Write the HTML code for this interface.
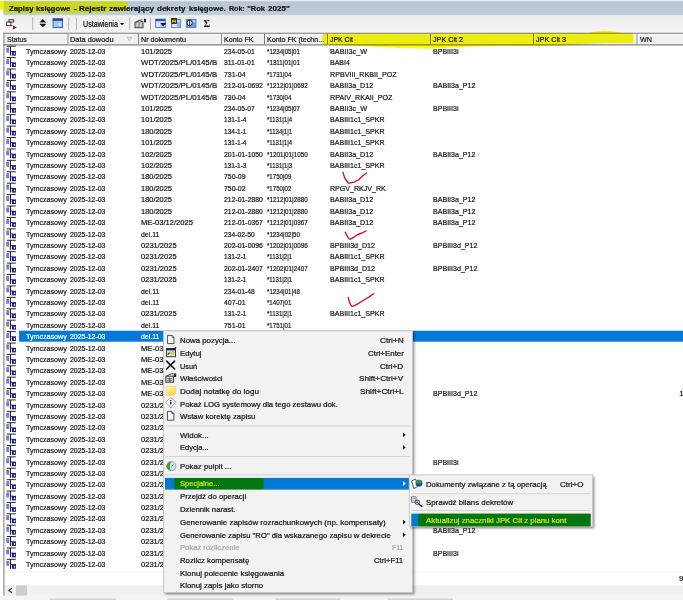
<!DOCTYPE html>
<html lang="pl"><head><meta charset="utf-8"><title>Zapisy księgowe</title>
<style>
html,body{margin:0;padding:0}
body{width:683px;height:600px;overflow:hidden;position:relative;background:#fff;font-family:"Liberation Sans",sans-serif;color:#161616}
.abs,.t,i{position:absolute;display:block}
.t{white-space:nowrap;transform-origin:0 0;-webkit-text-stroke:0.22px currentColor}
.sep{height:1px;background:#d6d6d6}
svg{position:absolute;display:block;overflow:visible}
</style></head><body>
<svg style="left:0;top:0" width="683" height="600" viewBox="0 0 683 600">
<defs><linearGradient id="tg" x1="0" y1="0" x2="0" y2="1"><stop offset="0" stop-color="#e9edf3"/><stop offset="0.05" stop-color="#e9edf3"/><stop offset="0.11" stop-color="#b8c6d7"/><stop offset="1" stop-color="#c2cddb"/></linearGradient>
<linearGradient id="tbg" x1="0" y1="0" x2="0" y2="1"><stop offset="0" stop-color="#eeeeee"/><stop offset="1" stop-color="#f4f4f4"/></linearGradient>
<filter id="sh" x="-5%" y="-5%" width="110%" height="110%"><feGaussianBlur stdDeviation="0.9"/></filter></defs>
<rect x="3.5" y="0" width="680" height="15.5" fill="url(#tg)"/>
<rect x="3.5" y="15.5" width="680" height="17.6" fill="url(#tbg)"/>
<rect x="4" y="33" width="679" height="12" fill="#f1f1f1"/>
<rect x="4.4" y="585.2" width="678.6" height="10.6" fill="#f0f0f0"/>
<rect x="0" y="595.8" width="683" height="4.2" fill="#f3f3f3"/>
<rect x="16" y="585.4" width="11.1" height="10.2" fill="#cdcdcd"/>
<rect x="4.6" y="571.4" width="678.4" height="1" fill="#f3f3f3"/>
<path d="M49.8 599.2H116.2M167.3 599.2H233.4M275.5 599.2H340.4M387.6 599.2H452.9" stroke="#d2d2d2" stroke-width="1.6"/>
<path d="M32.7 17.6V30M68.7 17.6V30M76.5 17.6V30M129.7 17.6V30M150.5 17.6V30" stroke="#b4b4b4" stroke-width="1"/>
</svg>
<svg style="left:0;top:0" width="140" height="16" viewBox="0 0 140 16"><path d="M3.5 1.3H122Q126.4 1.6 127.8 3.4L128.2 9.6Q127.6 11.2 124 11.5L110 11.6Q107 12.8 103 13H3.5Z" fill="#c9d622"/><rect x="0" y="0.9" width="3.5" height="8.8" fill="#f1f114"/></svg>
<span class="t" style="top:5.30px;font-size:7.5px;line-height:8.62px;left:8.80px;transform:scaleX(1.0354);color:#141414;font-weight:bold;">Zapisy</span><span class="t" style="top:5.30px;font-size:7.5px;line-height:8.62px;left:36.40px;transform:scaleX(1.0159);color:#141414;font-weight:bold;">księgowe</span><span class="t" style="top:5.30px;font-size:7.5px;line-height:8.62px;left:74.20px;transform:scaleX(1.0410);color:#141414;font-weight:bold;">-</span><span class="t" style="top:5.30px;font-size:7.5px;line-height:8.62px;left:78.80px;transform:scaleX(1.0775);color:#141414;font-weight:bold;">Rejestr</span><span class="t" style="top:5.30px;font-size:7.5px;line-height:8.62px;left:108.70px;transform:scaleX(1.0768);color:#141414;font-weight:bold;">zawierający</span><span class="t" style="top:5.30px;font-size:7.5px;line-height:8.62px;left:156.80px;transform:scaleX(1.0681);color:#141414;font-weight:bold;">dekrety</span><span class="t" style="top:5.30px;font-size:7.5px;line-height:8.62px;left:189.20px;transform:scaleX(1.0182);color:#141414;font-weight:bold;">księgowe.</span><span class="t" style="top:5.30px;font-size:7.5px;line-height:8.62px;left:228.50px;transform:scaleX(0.9420);color:#141414;font-weight:bold;">Rok:</span><span class="t" style="top:5.30px;font-size:7.5px;line-height:8.62px;left:247.30px;color:#141414;font-weight:bold;">&quot;Rok</span><span class="t" style="top:5.30px;font-size:7.5px;line-height:8.62px;left:268.20px;transform:scaleX(1.0721);color:#141414;font-weight:bold;">2025&quot;</span>
<span class="t" style="top:19.70px;font-size:8.2px;line-height:9.42px;left:83.40px;transform:scaleX(0.8715);color:#141414;">Ustawienia</span>
<svg style="left:0;top:0" width="683" height="34" viewBox="0 0 683 34">
<!-- icon1 -->
<rect x="6.6" y="22" width="4.2" height="3.6" fill="#fff" stroke="#2a2a2a" stroke-width="0.9"/>
<rect x="8.9" y="19.7" width="4.8" height="2.3" fill="#f6f2b4" stroke="#2a2a2a" stroke-width="0.9"/>
<path d="M10.8 25.6H12.4" stroke="#2a2a2a" stroke-width="0.9"/>
<path d="M13 25.4L16.8 27.4L13 29.4Z" fill="#96121c"/>
<!-- icon2 up/down -->
<path d="M39.4 22.4L42.8 19L46.2 22.4Z" fill="#161616"/>
<rect x="39.8" y="22.6" width="6" height="1.1" fill="#9a9a9a"/>
<path d="M39.4 23.9L42.8 27.3L46.2 23.9Z" fill="#161616"/>
<!-- icon3 window -->
<rect x="53.1" y="18.9" width="9.4" height="8.7" fill="#a9c9f1" stroke="#2e5fc6" stroke-width="0.9"/>
<rect x="52.7" y="18.5" width="10.2" height="2.3" fill="#1f429e"/>
<rect x="57.4" y="22.6" width="4.2" height="3.6" fill="#d4e4f8" stroke="#7ea4dc" stroke-width="0.5"/>
<!-- icon4 properties -->
<path d="M135 27.7V22.4L139.4 20.3L143 22V27.7Z" fill="#b9b9b9" stroke="#4a4a4a" stroke-width="1.05"/>
<path d="M136.6 24H141.4M136.6 25.8H141.4" stroke="#f2f2f2" stroke-width="0.8"/><path d="M139 22.6V27.4" stroke="#5a5a5a" stroke-width="0.9"/>
<path d="M136 22.4L142.4 19.2" stroke="#5e5e5e" stroke-width="0.9"/>
<rect x="144" y="18.8" width="1.9" height="3.5" fill="#14147c"/>
<!-- icon5 window w/ dropdown -->
<rect x="155.6" y="19.1" width="9.7" height="8.3" fill="#b4d0f3" stroke="#3a70cf" stroke-width="0.8"/>
<rect x="155.6" y="19.1" width="9.7" height="1.9" fill="#2152b6"/>
<rect x="156.8" y="22.4" width="1" height="4" fill="#fff"/><rect x="158.6" y="22.4" width="1" height="4" fill="#fff"/>
<path d="M160.3 22.9H166.1L163.2 26.5Z" fill="#101010"/>
<!-- icon6 window w/ label -->
<rect x="171.5" y="19.3" width="9.2" height="8.2" fill="#8fb8e8" stroke="#3c7acb" stroke-width="0.8"/>
<rect x="172.4" y="24" width="4.4" height="2.9" fill="#dfeaf8"/>
<rect x="176.9" y="20.4" width="3" height="1.2" fill="#e8f0fb"/>
<rect x="171.1" y="18" width="5.8" height="5.8" fill="#2a2508"/>
<path d="M172.6 22.8V20.2H175.4V22.8M172.6 21.6H175.4" stroke="#e6d23a" stroke-width="0.9" fill="none"/>
<!-- icon7 window w/ () -->
<rect x="186.5" y="19.3" width="9.5" height="8.2" fill="#6d9fdc" stroke="#3c7acb" stroke-width="0.8"/>
<rect x="192.4" y="20.6" width="3" height="1.2" fill="#e8f0fb"/>
<ellipse cx="189.6" cy="22.8" rx="2.6" ry="3" fill="#fff" stroke="#121212" stroke-width="1"/>
<path d="M189.6 20V25.6" stroke="#121212" stroke-width="0.9"/>
<text x="203.4" y="27.1" font-family="'Liberation Serif',serif" font-weight="bold" font-size="10.2" fill="#101010">Σ</text>
<!-- dropdown arrow of Ustawienia -->
<path d="M119.8 23H124.4L122.1 25.3Z" fill="#161616"/>
</svg>

<svg style="left:0;top:0" width="683" height="600" viewBox="0 0 683 600"><path d="M3.5 33.3H683" stroke="#646464" stroke-width="1"/><path d="M4.4 34.3H683" stroke="#fff" stroke-width="0.9"/><path d="M3.5 44.85H683" stroke="#828282" stroke-width="1.2"/><path d="M68.10 33.8V44.3" stroke="#6e6e6e" stroke-width="1"/><path d="M69.05 33.8V44.3" stroke="#fff" stroke-width="0.9"/><path d="M138.70 33.8V44.3" stroke="#6e6e6e" stroke-width="1"/><path d="M139.65 33.8V44.3" stroke="#fff" stroke-width="0.9"/><path d="M221.80 33.8V44.3" stroke="#6e6e6e" stroke-width="1"/><path d="M222.75 33.8V44.3" stroke="#fff" stroke-width="0.9"/><path d="M264.50 33.8V44.3" stroke="#6e6e6e" stroke-width="1"/><path d="M265.45 33.8V44.3" stroke="#fff" stroke-width="0.9"/><path d="M327.70 33.8V44.3" stroke="#6e6e6e" stroke-width="1"/><path d="M328.65 33.8V44.3" stroke="#fff" stroke-width="0.9"/><path d="M430.60 33.8V44.3" stroke="#6e6e6e" stroke-width="1"/><path d="M431.55 33.8V44.3" stroke="#fff" stroke-width="0.9"/><path d="M533.50 33.8V44.3" stroke="#6e6e6e" stroke-width="1"/><path d="M534.45 33.8V44.3" stroke="#fff" stroke-width="0.9"/><path d="M637.10 33.8V44.3" stroke="#6e6e6e" stroke-width="1"/><path d="M638.05 33.8V44.3" stroke="#fff" stroke-width="0.9"/><path d="M3.95 32.8V595.8" stroke="#707070" stroke-width="0.95"/></svg>
<span class="t" style="top:35.20px;font-size:8.0px;line-height:9.19px;left:7.00px;transform:scaleX(0.8730);color:#161616;">Status</span>
<span class="t" style="top:35.20px;font-size:8.0px;line-height:9.19px;left:69.50px;transform:scaleX(0.9227);color:#161616;">Data dowodu</span>
<span class="t" style="top:35.20px;font-size:8.0px;line-height:9.19px;left:140.70px;transform:scaleX(0.8956);color:#161616;">Nr dokumentu</span>
<span class="t" style="top:35.20px;font-size:8.0px;line-height:9.19px;left:223.90px;transform:scaleX(0.8845);color:#161616;">Konto FK</span>
<span class="t" style="top:35.20px;font-size:8.0px;line-height:9.19px;left:266.60px;transform:scaleX(0.8856);color:#161616;">Konto FK (techn...</span>
<span class="t" style="top:35.20px;font-size:8.0px;line-height:9.19px;left:329.90px;transform:scaleX(0.8548);color:#161616;">JPK Cit</span>
<span class="t" style="top:35.20px;font-size:8.0px;line-height:9.19px;left:433.00px;transform:scaleX(0.8997);color:#161616;">JPK Cit 2</span>
<span class="t" style="top:35.20px;font-size:8.0px;line-height:9.19px;left:536.00px;transform:scaleX(0.8997);color:#161616;">JPK Cit 3</span>
<span class="t" style="top:35.20px;font-size:8.0px;line-height:9.19px;left:640.10px;transform:scaleX(0.8928);color:#161616;">WN</span>
<svg style="left:127.4px;top:37.4px" width="5" height="4" viewBox="0 0 5 4"><path d="M0.3 0.3H4.7L2.5 3.6Z" fill="none" stroke="#9a9a9a" stroke-width="0.6"/></svg>
<svg style="left:0;top:0" width="20" height="600" viewBox="0 0 20 600"><g transform="translate(6.40 45.70)"><rect x="0" y="2" width="2.6" height="4.6" fill="#a8a8ea"/><path d="M0 2.6h2.6M0 3.9h2.6M0 5.2h2.6M0 6.4h2.6" stroke="#5656c8" stroke-width="0.8"/><path d="M0.4 0.5H9.4" stroke="#1c1c1c" stroke-width="0.95"/><path d="M4.05 0.5V9.9" stroke="#1c1c1c" stroke-width="1.05"/><path d="M4.5 5.6H6" stroke="#1c1c1c" stroke-width="0.8"/><rect x="5.5" y="5.3" width="4.1" height="4.6" fill="#18188e"/><rect x="7.4" y="6.9" width="1.4" height="1.8" fill="#fff"/></g><g transform="translate(6.40 57.12)"><rect x="0" y="2" width="2.6" height="4.6" fill="#a8a8ea"/><path d="M0 2.6h2.6M0 3.9h2.6M0 5.2h2.6M0 6.4h2.6" stroke="#5656c8" stroke-width="0.8"/><path d="M0.4 0.5H9.4" stroke="#1c1c1c" stroke-width="0.95"/><path d="M4.05 0.5V9.9" stroke="#1c1c1c" stroke-width="1.05"/><path d="M4.5 5.6H6" stroke="#1c1c1c" stroke-width="0.8"/><rect x="5.5" y="5.3" width="4.1" height="4.6" fill="#18188e"/><rect x="7.4" y="6.9" width="1.4" height="1.8" fill="#fff"/></g><g transform="translate(6.40 68.53)"><rect x="0" y="2" width="2.6" height="4.6" fill="#a8a8ea"/><path d="M0 2.6h2.6M0 3.9h2.6M0 5.2h2.6M0 6.4h2.6" stroke="#5656c8" stroke-width="0.8"/><path d="M0.4 0.5H9.4" stroke="#1c1c1c" stroke-width="0.95"/><path d="M4.05 0.5V9.9" stroke="#1c1c1c" stroke-width="1.05"/><path d="M4.5 5.6H6" stroke="#1c1c1c" stroke-width="0.8"/><rect x="5.5" y="5.3" width="4.1" height="4.6" fill="#18188e"/><rect x="7.4" y="6.9" width="1.4" height="1.8" fill="#fff"/></g><g transform="translate(6.40 79.95)"><rect x="0" y="2" width="2.6" height="4.6" fill="#a8a8ea"/><path d="M0 2.6h2.6M0 3.9h2.6M0 5.2h2.6M0 6.4h2.6" stroke="#5656c8" stroke-width="0.8"/><path d="M0.4 0.5H9.4" stroke="#1c1c1c" stroke-width="0.95"/><path d="M4.05 0.5V9.9" stroke="#1c1c1c" stroke-width="1.05"/><path d="M4.5 5.6H6" stroke="#1c1c1c" stroke-width="0.8"/><rect x="5.5" y="5.3" width="4.1" height="4.6" fill="#18188e"/><rect x="7.4" y="6.9" width="1.4" height="1.8" fill="#fff"/></g><g transform="translate(6.40 91.36)"><rect x="0" y="2" width="2.6" height="4.6" fill="#a8a8ea"/><path d="M0 2.6h2.6M0 3.9h2.6M0 5.2h2.6M0 6.4h2.6" stroke="#5656c8" stroke-width="0.8"/><path d="M0.4 0.5H9.4" stroke="#1c1c1c" stroke-width="0.95"/><path d="M4.05 0.5V9.9" stroke="#1c1c1c" stroke-width="1.05"/><path d="M4.5 5.6H6" stroke="#1c1c1c" stroke-width="0.8"/><rect x="5.5" y="5.3" width="4.1" height="4.6" fill="#18188e"/><rect x="7.4" y="6.9" width="1.4" height="1.8" fill="#fff"/></g><g transform="translate(6.40 102.78)"><rect x="0" y="2" width="2.6" height="4.6" fill="#a8a8ea"/><path d="M0 2.6h2.6M0 3.9h2.6M0 5.2h2.6M0 6.4h2.6" stroke="#5656c8" stroke-width="0.8"/><path d="M0.4 0.5H9.4" stroke="#1c1c1c" stroke-width="0.95"/><path d="M4.05 0.5V9.9" stroke="#1c1c1c" stroke-width="1.05"/><path d="M4.5 5.6H6" stroke="#1c1c1c" stroke-width="0.8"/><rect x="5.5" y="5.3" width="4.1" height="4.6" fill="#18188e"/><rect x="7.4" y="6.9" width="1.4" height="1.8" fill="#fff"/></g><g transform="translate(6.40 114.20)"><rect x="0" y="2" width="2.6" height="4.6" fill="#a8a8ea"/><path d="M0 2.6h2.6M0 3.9h2.6M0 5.2h2.6M0 6.4h2.6" stroke="#5656c8" stroke-width="0.8"/><path d="M0.4 0.5H9.4" stroke="#1c1c1c" stroke-width="0.95"/><path d="M4.05 0.5V9.9" stroke="#1c1c1c" stroke-width="1.05"/><path d="M4.5 5.6H6" stroke="#1c1c1c" stroke-width="0.8"/><rect x="5.5" y="5.3" width="4.1" height="4.6" fill="#18188e"/><rect x="7.4" y="6.9" width="1.4" height="1.8" fill="#fff"/></g><g transform="translate(6.40 125.61)"><rect x="0" y="2" width="2.6" height="4.6" fill="#a8a8ea"/><path d="M0 2.6h2.6M0 3.9h2.6M0 5.2h2.6M0 6.4h2.6" stroke="#5656c8" stroke-width="0.8"/><path d="M0.4 0.5H9.4" stroke="#1c1c1c" stroke-width="0.95"/><path d="M4.05 0.5V9.9" stroke="#1c1c1c" stroke-width="1.05"/><path d="M4.5 5.6H6" stroke="#1c1c1c" stroke-width="0.8"/><rect x="5.5" y="5.3" width="4.1" height="4.6" fill="#18188e"/><rect x="7.4" y="6.9" width="1.4" height="1.8" fill="#fff"/></g><g transform="translate(6.40 137.03)"><rect x="0" y="2" width="2.6" height="4.6" fill="#a8a8ea"/><path d="M0 2.6h2.6M0 3.9h2.6M0 5.2h2.6M0 6.4h2.6" stroke="#5656c8" stroke-width="0.8"/><path d="M0.4 0.5H9.4" stroke="#1c1c1c" stroke-width="0.95"/><path d="M4.05 0.5V9.9" stroke="#1c1c1c" stroke-width="1.05"/><path d="M4.5 5.6H6" stroke="#1c1c1c" stroke-width="0.8"/><rect x="5.5" y="5.3" width="4.1" height="4.6" fill="#18188e"/><rect x="7.4" y="6.9" width="1.4" height="1.8" fill="#fff"/></g><g transform="translate(6.40 148.44)"><rect x="0" y="2" width="2.6" height="4.6" fill="#a8a8ea"/><path d="M0 2.6h2.6M0 3.9h2.6M0 5.2h2.6M0 6.4h2.6" stroke="#5656c8" stroke-width="0.8"/><path d="M0.4 0.5H9.4" stroke="#1c1c1c" stroke-width="0.95"/><path d="M4.05 0.5V9.9" stroke="#1c1c1c" stroke-width="1.05"/><path d="M4.5 5.6H6" stroke="#1c1c1c" stroke-width="0.8"/><rect x="5.5" y="5.3" width="4.1" height="4.6" fill="#18188e"/><rect x="7.4" y="6.9" width="1.4" height="1.8" fill="#fff"/></g><g transform="translate(6.40 159.86)"><rect x="0" y="2" width="2.6" height="4.6" fill="#a8a8ea"/><path d="M0 2.6h2.6M0 3.9h2.6M0 5.2h2.6M0 6.4h2.6" stroke="#5656c8" stroke-width="0.8"/><path d="M0.4 0.5H9.4" stroke="#1c1c1c" stroke-width="0.95"/><path d="M4.05 0.5V9.9" stroke="#1c1c1c" stroke-width="1.05"/><path d="M4.5 5.6H6" stroke="#1c1c1c" stroke-width="0.8"/><rect x="5.5" y="5.3" width="4.1" height="4.6" fill="#18188e"/><rect x="7.4" y="6.9" width="1.4" height="1.8" fill="#fff"/></g><g transform="translate(6.40 171.28)"><rect x="0" y="2" width="2.6" height="4.6" fill="#a8a8ea"/><path d="M0 2.6h2.6M0 3.9h2.6M0 5.2h2.6M0 6.4h2.6" stroke="#5656c8" stroke-width="0.8"/><path d="M0.4 0.5H9.4" stroke="#1c1c1c" stroke-width="0.95"/><path d="M4.05 0.5V9.9" stroke="#1c1c1c" stroke-width="1.05"/><path d="M4.5 5.6H6" stroke="#1c1c1c" stroke-width="0.8"/><rect x="5.5" y="5.3" width="4.1" height="4.6" fill="#18188e"/><rect x="7.4" y="6.9" width="1.4" height="1.8" fill="#fff"/></g><g transform="translate(6.40 182.69)"><rect x="0" y="2" width="2.6" height="4.6" fill="#a8a8ea"/><path d="M0 2.6h2.6M0 3.9h2.6M0 5.2h2.6M0 6.4h2.6" stroke="#5656c8" stroke-width="0.8"/><path d="M0.4 0.5H9.4" stroke="#1c1c1c" stroke-width="0.95"/><path d="M4.05 0.5V9.9" stroke="#1c1c1c" stroke-width="1.05"/><path d="M4.5 5.6H6" stroke="#1c1c1c" stroke-width="0.8"/><rect x="5.5" y="5.3" width="4.1" height="4.6" fill="#18188e"/><rect x="7.4" y="6.9" width="1.4" height="1.8" fill="#fff"/></g><g transform="translate(6.40 194.11)"><rect x="0" y="2" width="2.6" height="4.6" fill="#a8a8ea"/><path d="M0 2.6h2.6M0 3.9h2.6M0 5.2h2.6M0 6.4h2.6" stroke="#5656c8" stroke-width="0.8"/><path d="M0.4 0.5H9.4" stroke="#1c1c1c" stroke-width="0.95"/><path d="M4.05 0.5V9.9" stroke="#1c1c1c" stroke-width="1.05"/><path d="M4.5 5.6H6" stroke="#1c1c1c" stroke-width="0.8"/><rect x="5.5" y="5.3" width="4.1" height="4.6" fill="#18188e"/><rect x="7.4" y="6.9" width="1.4" height="1.8" fill="#fff"/></g><g transform="translate(6.40 205.52)"><rect x="0" y="2" width="2.6" height="4.6" fill="#a8a8ea"/><path d="M0 2.6h2.6M0 3.9h2.6M0 5.2h2.6M0 6.4h2.6" stroke="#5656c8" stroke-width="0.8"/><path d="M0.4 0.5H9.4" stroke="#1c1c1c" stroke-width="0.95"/><path d="M4.05 0.5V9.9" stroke="#1c1c1c" stroke-width="1.05"/><path d="M4.5 5.6H6" stroke="#1c1c1c" stroke-width="0.8"/><rect x="5.5" y="5.3" width="4.1" height="4.6" fill="#18188e"/><rect x="7.4" y="6.9" width="1.4" height="1.8" fill="#fff"/></g><g transform="translate(6.40 216.94)"><rect x="0" y="2" width="2.6" height="4.6" fill="#a8a8ea"/><path d="M0 2.6h2.6M0 3.9h2.6M0 5.2h2.6M0 6.4h2.6" stroke="#5656c8" stroke-width="0.8"/><path d="M0.4 0.5H9.4" stroke="#1c1c1c" stroke-width="0.95"/><path d="M4.05 0.5V9.9" stroke="#1c1c1c" stroke-width="1.05"/><path d="M4.5 5.6H6" stroke="#1c1c1c" stroke-width="0.8"/><rect x="5.5" y="5.3" width="4.1" height="4.6" fill="#18188e"/><rect x="7.4" y="6.9" width="1.4" height="1.8" fill="#fff"/></g><g transform="translate(6.40 228.36)"><rect x="0" y="2" width="2.6" height="4.6" fill="#a8a8ea"/><path d="M0 2.6h2.6M0 3.9h2.6M0 5.2h2.6M0 6.4h2.6" stroke="#5656c8" stroke-width="0.8"/><path d="M0.4 0.5H9.4" stroke="#1c1c1c" stroke-width="0.95"/><path d="M4.05 0.5V9.9" stroke="#1c1c1c" stroke-width="1.05"/><path d="M4.5 5.6H6" stroke="#1c1c1c" stroke-width="0.8"/><rect x="5.5" y="5.3" width="4.1" height="4.6" fill="#18188e"/><rect x="7.4" y="6.9" width="1.4" height="1.8" fill="#fff"/></g><g transform="translate(6.40 239.77)"><rect x="0" y="2" width="2.6" height="4.6" fill="#a8a8ea"/><path d="M0 2.6h2.6M0 3.9h2.6M0 5.2h2.6M0 6.4h2.6" stroke="#5656c8" stroke-width="0.8"/><path d="M0.4 0.5H9.4" stroke="#1c1c1c" stroke-width="0.95"/><path d="M4.05 0.5V9.9" stroke="#1c1c1c" stroke-width="1.05"/><path d="M4.5 5.6H6" stroke="#1c1c1c" stroke-width="0.8"/><rect x="5.5" y="5.3" width="4.1" height="4.6" fill="#18188e"/><rect x="7.4" y="6.9" width="1.4" height="1.8" fill="#fff"/></g><g transform="translate(6.40 251.19)"><rect x="0" y="2" width="2.6" height="4.6" fill="#a8a8ea"/><path d="M0 2.6h2.6M0 3.9h2.6M0 5.2h2.6M0 6.4h2.6" stroke="#5656c8" stroke-width="0.8"/><path d="M0.4 0.5H9.4" stroke="#1c1c1c" stroke-width="0.95"/><path d="M4.05 0.5V9.9" stroke="#1c1c1c" stroke-width="1.05"/><path d="M4.5 5.6H6" stroke="#1c1c1c" stroke-width="0.8"/><rect x="5.5" y="5.3" width="4.1" height="4.6" fill="#18188e"/><rect x="7.4" y="6.9" width="1.4" height="1.8" fill="#fff"/></g><g transform="translate(6.40 262.60)"><rect x="0" y="2" width="2.6" height="4.6" fill="#a8a8ea"/><path d="M0 2.6h2.6M0 3.9h2.6M0 5.2h2.6M0 6.4h2.6" stroke="#5656c8" stroke-width="0.8"/><path d="M0.4 0.5H9.4" stroke="#1c1c1c" stroke-width="0.95"/><path d="M4.05 0.5V9.9" stroke="#1c1c1c" stroke-width="1.05"/><path d="M4.5 5.6H6" stroke="#1c1c1c" stroke-width="0.8"/><rect x="5.5" y="5.3" width="4.1" height="4.6" fill="#18188e"/><rect x="7.4" y="6.9" width="1.4" height="1.8" fill="#fff"/></g><g transform="translate(6.40 274.02)"><rect x="0" y="2" width="2.6" height="4.6" fill="#a8a8ea"/><path d="M0 2.6h2.6M0 3.9h2.6M0 5.2h2.6M0 6.4h2.6" stroke="#5656c8" stroke-width="0.8"/><path d="M0.4 0.5H9.4" stroke="#1c1c1c" stroke-width="0.95"/><path d="M4.05 0.5V9.9" stroke="#1c1c1c" stroke-width="1.05"/><path d="M4.5 5.6H6" stroke="#1c1c1c" stroke-width="0.8"/><rect x="5.5" y="5.3" width="4.1" height="4.6" fill="#18188e"/><rect x="7.4" y="6.9" width="1.4" height="1.8" fill="#fff"/></g><g transform="translate(6.40 285.44)"><rect x="0" y="2" width="2.6" height="4.6" fill="#a8a8ea"/><path d="M0 2.6h2.6M0 3.9h2.6M0 5.2h2.6M0 6.4h2.6" stroke="#5656c8" stroke-width="0.8"/><path d="M0.4 0.5H9.4" stroke="#1c1c1c" stroke-width="0.95"/><path d="M4.05 0.5V9.9" stroke="#1c1c1c" stroke-width="1.05"/><path d="M4.5 5.6H6" stroke="#1c1c1c" stroke-width="0.8"/><rect x="5.5" y="5.3" width="4.1" height="4.6" fill="#18188e"/><rect x="7.4" y="6.9" width="1.4" height="1.8" fill="#fff"/></g><g transform="translate(6.40 296.85)"><rect x="0" y="2" width="2.6" height="4.6" fill="#a8a8ea"/><path d="M0 2.6h2.6M0 3.9h2.6M0 5.2h2.6M0 6.4h2.6" stroke="#5656c8" stroke-width="0.8"/><path d="M0.4 0.5H9.4" stroke="#1c1c1c" stroke-width="0.95"/><path d="M4.05 0.5V9.9" stroke="#1c1c1c" stroke-width="1.05"/><path d="M4.5 5.6H6" stroke="#1c1c1c" stroke-width="0.8"/><rect x="5.5" y="5.3" width="4.1" height="4.6" fill="#18188e"/><rect x="7.4" y="6.9" width="1.4" height="1.8" fill="#fff"/></g><g transform="translate(6.40 308.27)"><rect x="0" y="2" width="2.6" height="4.6" fill="#a8a8ea"/><path d="M0 2.6h2.6M0 3.9h2.6M0 5.2h2.6M0 6.4h2.6" stroke="#5656c8" stroke-width="0.8"/><path d="M0.4 0.5H9.4" stroke="#1c1c1c" stroke-width="0.95"/><path d="M4.05 0.5V9.9" stroke="#1c1c1c" stroke-width="1.05"/><path d="M4.5 5.6H6" stroke="#1c1c1c" stroke-width="0.8"/><rect x="5.5" y="5.3" width="4.1" height="4.6" fill="#18188e"/><rect x="7.4" y="6.9" width="1.4" height="1.8" fill="#fff"/></g><g transform="translate(6.40 319.68)"><rect x="0" y="2" width="2.6" height="4.6" fill="#a8a8ea"/><path d="M0 2.6h2.6M0 3.9h2.6M0 5.2h2.6M0 6.4h2.6" stroke="#5656c8" stroke-width="0.8"/><path d="M0.4 0.5H9.4" stroke="#1c1c1c" stroke-width="0.95"/><path d="M4.05 0.5V9.9" stroke="#1c1c1c" stroke-width="1.05"/><path d="M4.5 5.6H6" stroke="#1c1c1c" stroke-width="0.8"/><rect x="5.5" y="5.3" width="4.1" height="4.6" fill="#18188e"/><rect x="7.4" y="6.9" width="1.4" height="1.8" fill="#fff"/></g><g transform="translate(6.40 331.10)"><rect x="0" y="2" width="2.6" height="4.6" fill="#a8a8ea"/><path d="M0 2.6h2.6M0 3.9h2.6M0 5.2h2.6M0 6.4h2.6" stroke="#5656c8" stroke-width="0.8"/><path d="M0.4 0.5H9.4" stroke="#1c1c1c" stroke-width="0.95"/><path d="M4.05 0.5V9.9" stroke="#1c1c1c" stroke-width="1.05"/><path d="M4.5 5.6H6" stroke="#1c1c1c" stroke-width="0.8"/><rect x="5.5" y="5.3" width="4.1" height="4.6" fill="#18188e"/><rect x="7.4" y="6.9" width="1.4" height="1.8" fill="#fff"/></g><g transform="translate(6.40 342.52)"><rect x="0" y="2" width="2.6" height="4.6" fill="#a8a8ea"/><path d="M0 2.6h2.6M0 3.9h2.6M0 5.2h2.6M0 6.4h2.6" stroke="#5656c8" stroke-width="0.8"/><path d="M0.4 0.5H9.4" stroke="#1c1c1c" stroke-width="0.95"/><path d="M4.05 0.5V9.9" stroke="#1c1c1c" stroke-width="1.05"/><path d="M4.5 5.6H6" stroke="#1c1c1c" stroke-width="0.8"/><rect x="5.5" y="5.3" width="4.1" height="4.6" fill="#18188e"/><rect x="7.4" y="6.9" width="1.4" height="1.8" fill="#fff"/></g><g transform="translate(6.40 353.90)"><rect x="0" y="2" width="2.6" height="4.6" fill="#a8a8ea"/><path d="M0 2.6h2.6M0 3.9h2.6M0 5.2h2.6M0 6.4h2.6" stroke="#5656c8" stroke-width="0.8"/><path d="M0.4 0.5H9.4" stroke="#1c1c1c" stroke-width="0.95"/><path d="M4.05 0.5V9.9" stroke="#1c1c1c" stroke-width="1.05"/><path d="M4.5 5.6H6" stroke="#1c1c1c" stroke-width="0.8"/><rect x="5.5" y="5.3" width="4.1" height="4.6" fill="#18188e"/><rect x="7.4" y="6.9" width="1.4" height="1.8" fill="#fff"/></g><g transform="translate(6.40 365.29)"><rect x="0" y="2" width="2.6" height="4.6" fill="#a8a8ea"/><path d="M0 2.6h2.6M0 3.9h2.6M0 5.2h2.6M0 6.4h2.6" stroke="#5656c8" stroke-width="0.8"/><path d="M0.4 0.5H9.4" stroke="#1c1c1c" stroke-width="0.95"/><path d="M4.05 0.5V9.9" stroke="#1c1c1c" stroke-width="1.05"/><path d="M4.5 5.6H6" stroke="#1c1c1c" stroke-width="0.8"/><rect x="5.5" y="5.3" width="4.1" height="4.6" fill="#18188e"/><rect x="7.4" y="6.9" width="1.4" height="1.8" fill="#fff"/></g><g transform="translate(6.40 376.67)"><rect x="0" y="2" width="2.6" height="4.6" fill="#a8a8ea"/><path d="M0 2.6h2.6M0 3.9h2.6M0 5.2h2.6M0 6.4h2.6" stroke="#5656c8" stroke-width="0.8"/><path d="M0.4 0.5H9.4" stroke="#1c1c1c" stroke-width="0.95"/><path d="M4.05 0.5V9.9" stroke="#1c1c1c" stroke-width="1.05"/><path d="M4.5 5.6H6" stroke="#1c1c1c" stroke-width="0.8"/><rect x="5.5" y="5.3" width="4.1" height="4.6" fill="#18188e"/><rect x="7.4" y="6.9" width="1.4" height="1.8" fill="#fff"/></g><g transform="translate(6.40 388.06)"><rect x="0" y="2" width="2.6" height="4.6" fill="#a8a8ea"/><path d="M0 2.6h2.6M0 3.9h2.6M0 5.2h2.6M0 6.4h2.6" stroke="#5656c8" stroke-width="0.8"/><path d="M0.4 0.5H9.4" stroke="#1c1c1c" stroke-width="0.95"/><path d="M4.05 0.5V9.9" stroke="#1c1c1c" stroke-width="1.05"/><path d="M4.5 5.6H6" stroke="#1c1c1c" stroke-width="0.8"/><rect x="5.5" y="5.3" width="4.1" height="4.6" fill="#18188e"/><rect x="7.4" y="6.9" width="1.4" height="1.8" fill="#fff"/></g><g transform="translate(6.40 399.44)"><rect x="0" y="2" width="2.6" height="4.6" fill="#a8a8ea"/><path d="M0 2.6h2.6M0 3.9h2.6M0 5.2h2.6M0 6.4h2.6" stroke="#5656c8" stroke-width="0.8"/><path d="M0.4 0.5H9.4" stroke="#1c1c1c" stroke-width="0.95"/><path d="M4.05 0.5V9.9" stroke="#1c1c1c" stroke-width="1.05"/><path d="M4.5 5.6H6" stroke="#1c1c1c" stroke-width="0.8"/><rect x="5.5" y="5.3" width="4.1" height="4.6" fill="#18188e"/><rect x="7.4" y="6.9" width="1.4" height="1.8" fill="#fff"/></g><g transform="translate(6.40 410.83)"><rect x="0" y="2" width="2.6" height="4.6" fill="#a8a8ea"/><path d="M0 2.6h2.6M0 3.9h2.6M0 5.2h2.6M0 6.4h2.6" stroke="#5656c8" stroke-width="0.8"/><path d="M0.4 0.5H9.4" stroke="#1c1c1c" stroke-width="0.95"/><path d="M4.05 0.5V9.9" stroke="#1c1c1c" stroke-width="1.05"/><path d="M4.5 5.6H6" stroke="#1c1c1c" stroke-width="0.8"/><rect x="5.5" y="5.3" width="4.1" height="4.6" fill="#18188e"/><rect x="7.4" y="6.9" width="1.4" height="1.8" fill="#fff"/></g><g transform="translate(6.40 422.21)"><rect x="0" y="2" width="2.6" height="4.6" fill="#a8a8ea"/><path d="M0 2.6h2.6M0 3.9h2.6M0 5.2h2.6M0 6.4h2.6" stroke="#5656c8" stroke-width="0.8"/><path d="M0.4 0.5H9.4" stroke="#1c1c1c" stroke-width="0.95"/><path d="M4.05 0.5V9.9" stroke="#1c1c1c" stroke-width="1.05"/><path d="M4.5 5.6H6" stroke="#1c1c1c" stroke-width="0.8"/><rect x="5.5" y="5.3" width="4.1" height="4.6" fill="#18188e"/><rect x="7.4" y="6.9" width="1.4" height="1.8" fill="#fff"/></g><g transform="translate(6.40 433.60)"><rect x="0" y="2" width="2.6" height="4.6" fill="#a8a8ea"/><path d="M0 2.6h2.6M0 3.9h2.6M0 5.2h2.6M0 6.4h2.6" stroke="#5656c8" stroke-width="0.8"/><path d="M0.4 0.5H9.4" stroke="#1c1c1c" stroke-width="0.95"/><path d="M4.05 0.5V9.9" stroke="#1c1c1c" stroke-width="1.05"/><path d="M4.5 5.6H6" stroke="#1c1c1c" stroke-width="0.8"/><rect x="5.5" y="5.3" width="4.1" height="4.6" fill="#18188e"/><rect x="7.4" y="6.9" width="1.4" height="1.8" fill="#fff"/></g><g transform="translate(6.40 444.98)"><rect x="0" y="2" width="2.6" height="4.6" fill="#a8a8ea"/><path d="M0 2.6h2.6M0 3.9h2.6M0 5.2h2.6M0 6.4h2.6" stroke="#5656c8" stroke-width="0.8"/><path d="M0.4 0.5H9.4" stroke="#1c1c1c" stroke-width="0.95"/><path d="M4.05 0.5V9.9" stroke="#1c1c1c" stroke-width="1.05"/><path d="M4.5 5.6H6" stroke="#1c1c1c" stroke-width="0.8"/><rect x="5.5" y="5.3" width="4.1" height="4.6" fill="#18188e"/><rect x="7.4" y="6.9" width="1.4" height="1.8" fill="#fff"/></g><g transform="translate(6.40 456.37)"><rect x="0" y="2" width="2.6" height="4.6" fill="#a8a8ea"/><path d="M0 2.6h2.6M0 3.9h2.6M0 5.2h2.6M0 6.4h2.6" stroke="#5656c8" stroke-width="0.8"/><path d="M0.4 0.5H9.4" stroke="#1c1c1c" stroke-width="0.95"/><path d="M4.05 0.5V9.9" stroke="#1c1c1c" stroke-width="1.05"/><path d="M4.5 5.6H6" stroke="#1c1c1c" stroke-width="0.8"/><rect x="5.5" y="5.3" width="4.1" height="4.6" fill="#18188e"/><rect x="7.4" y="6.9" width="1.4" height="1.8" fill="#fff"/></g><g transform="translate(6.40 467.75)"><rect x="0" y="2" width="2.6" height="4.6" fill="#a8a8ea"/><path d="M0 2.6h2.6M0 3.9h2.6M0 5.2h2.6M0 6.4h2.6" stroke="#5656c8" stroke-width="0.8"/><path d="M0.4 0.5H9.4" stroke="#1c1c1c" stroke-width="0.95"/><path d="M4.05 0.5V9.9" stroke="#1c1c1c" stroke-width="1.05"/><path d="M4.5 5.6H6" stroke="#1c1c1c" stroke-width="0.8"/><rect x="5.5" y="5.3" width="4.1" height="4.6" fill="#18188e"/><rect x="7.4" y="6.9" width="1.4" height="1.8" fill="#fff"/></g><g transform="translate(6.40 479.14)"><rect x="0" y="2" width="2.6" height="4.6" fill="#a8a8ea"/><path d="M0 2.6h2.6M0 3.9h2.6M0 5.2h2.6M0 6.4h2.6" stroke="#5656c8" stroke-width="0.8"/><path d="M0.4 0.5H9.4" stroke="#1c1c1c" stroke-width="0.95"/><path d="M4.05 0.5V9.9" stroke="#1c1c1c" stroke-width="1.05"/><path d="M4.5 5.6H6" stroke="#1c1c1c" stroke-width="0.8"/><rect x="5.5" y="5.3" width="4.1" height="4.6" fill="#18188e"/><rect x="7.4" y="6.9" width="1.4" height="1.8" fill="#fff"/></g><g transform="translate(6.40 490.52)"><rect x="0" y="2" width="2.6" height="4.6" fill="#a8a8ea"/><path d="M0 2.6h2.6M0 3.9h2.6M0 5.2h2.6M0 6.4h2.6" stroke="#5656c8" stroke-width="0.8"/><path d="M0.4 0.5H9.4" stroke="#1c1c1c" stroke-width="0.95"/><path d="M4.05 0.5V9.9" stroke="#1c1c1c" stroke-width="1.05"/><path d="M4.5 5.6H6" stroke="#1c1c1c" stroke-width="0.8"/><rect x="5.5" y="5.3" width="4.1" height="4.6" fill="#18188e"/><rect x="7.4" y="6.9" width="1.4" height="1.8" fill="#fff"/></g><g transform="translate(6.40 501.91)"><rect x="0" y="2" width="2.6" height="4.6" fill="#a8a8ea"/><path d="M0 2.6h2.6M0 3.9h2.6M0 5.2h2.6M0 6.4h2.6" stroke="#5656c8" stroke-width="0.8"/><path d="M0.4 0.5H9.4" stroke="#1c1c1c" stroke-width="0.95"/><path d="M4.05 0.5V9.9" stroke="#1c1c1c" stroke-width="1.05"/><path d="M4.5 5.6H6" stroke="#1c1c1c" stroke-width="0.8"/><rect x="5.5" y="5.3" width="4.1" height="4.6" fill="#18188e"/><rect x="7.4" y="6.9" width="1.4" height="1.8" fill="#fff"/></g><g transform="translate(6.40 513.29)"><rect x="0" y="2" width="2.6" height="4.6" fill="#a8a8ea"/><path d="M0 2.6h2.6M0 3.9h2.6M0 5.2h2.6M0 6.4h2.6" stroke="#5656c8" stroke-width="0.8"/><path d="M0.4 0.5H9.4" stroke="#1c1c1c" stroke-width="0.95"/><path d="M4.05 0.5V9.9" stroke="#1c1c1c" stroke-width="1.05"/><path d="M4.5 5.6H6" stroke="#1c1c1c" stroke-width="0.8"/><rect x="5.5" y="5.3" width="4.1" height="4.6" fill="#18188e"/><rect x="7.4" y="6.9" width="1.4" height="1.8" fill="#fff"/></g><g transform="translate(6.40 524.68)"><rect x="0" y="2" width="2.6" height="4.6" fill="#a8a8ea"/><path d="M0 2.6h2.6M0 3.9h2.6M0 5.2h2.6M0 6.4h2.6" stroke="#5656c8" stroke-width="0.8"/><path d="M0.4 0.5H9.4" stroke="#1c1c1c" stroke-width="0.95"/><path d="M4.05 0.5V9.9" stroke="#1c1c1c" stroke-width="1.05"/><path d="M4.5 5.6H6" stroke="#1c1c1c" stroke-width="0.8"/><rect x="5.5" y="5.3" width="4.1" height="4.6" fill="#18188e"/><rect x="7.4" y="6.9" width="1.4" height="1.8" fill="#fff"/></g><g transform="translate(6.40 536.06)"><rect x="0" y="2" width="2.6" height="4.6" fill="#a8a8ea"/><path d="M0 2.6h2.6M0 3.9h2.6M0 5.2h2.6M0 6.4h2.6" stroke="#5656c8" stroke-width="0.8"/><path d="M0.4 0.5H9.4" stroke="#1c1c1c" stroke-width="0.95"/><path d="M4.05 0.5V9.9" stroke="#1c1c1c" stroke-width="1.05"/><path d="M4.5 5.6H6" stroke="#1c1c1c" stroke-width="0.8"/><rect x="5.5" y="5.3" width="4.1" height="4.6" fill="#18188e"/><rect x="7.4" y="6.9" width="1.4" height="1.8" fill="#fff"/></g><g transform="translate(6.40 547.45)"><rect x="0" y="2" width="2.6" height="4.6" fill="#a8a8ea"/><path d="M0 2.6h2.6M0 3.9h2.6M0 5.2h2.6M0 6.4h2.6" stroke="#5656c8" stroke-width="0.8"/><path d="M0.4 0.5H9.4" stroke="#1c1c1c" stroke-width="0.95"/><path d="M4.05 0.5V9.9" stroke="#1c1c1c" stroke-width="1.05"/><path d="M4.5 5.6H6" stroke="#1c1c1c" stroke-width="0.8"/><rect x="5.5" y="5.3" width="4.1" height="4.6" fill="#18188e"/><rect x="7.4" y="6.9" width="1.4" height="1.8" fill="#fff"/></g><g transform="translate(6.40 558.83)"><rect x="0" y="2" width="2.6" height="4.6" fill="#a8a8ea"/><path d="M0 2.6h2.6M0 3.9h2.6M0 5.2h2.6M0 6.4h2.6" stroke="#5656c8" stroke-width="0.8"/><path d="M0.4 0.5H9.4" stroke="#1c1c1c" stroke-width="0.95"/><path d="M4.05 0.5V9.9" stroke="#1c1c1c" stroke-width="1.05"/><path d="M4.5 5.6H6" stroke="#1c1c1c" stroke-width="0.8"/><rect x="5.5" y="5.3" width="4.1" height="4.6" fill="#18188e"/><rect x="7.4" y="6.9" width="1.4" height="1.8" fill="#fff"/></g></svg>
<span class="t" style="top:46.90px;font-size:8.0px;line-height:9.19px;left:25.90px;transform:scaleX(0.8889);">Tymczasowy</span><span class="t" style="top:46.90px;font-size:8.0px;line-height:9.19px;left:69.50px;transform:scaleX(0.8651);">2025-12-03</span><span class="t" style="top:46.90px;font-size:8.0px;line-height:9.19px;left:140.60px;transform:scaleX(0.9291);">101/2025</span><span class="t" style="top:46.90px;font-size:8.0px;line-height:9.19px;left:223.80px;transform:scaleX(0.8417);">234-05-01</span><span class="t" style="top:46.90px;font-size:8.0px;line-height:9.19px;left:267.30px;transform:scaleX(0.7676);">*1234|05|01</span><span class="t" style="top:46.90px;font-size:8.0px;line-height:9.19px;left:329.50px;transform:scaleX(0.9070);">BABII3c_W</span><span class="t" style="top:46.90px;font-size:8.0px;line-height:9.19px;left:432.90px;transform:scaleX(0.8823);">BPBIII3i</span>
<span class="t" style="top:58.32px;font-size:8.0px;line-height:9.19px;left:25.90px;transform:scaleX(0.8889);">Tymczasowy</span><span class="t" style="top:58.32px;font-size:8.0px;line-height:9.19px;left:69.50px;transform:scaleX(0.8651);">2025-12-03</span><span class="t" style="top:58.32px;font-size:8.0px;line-height:9.19px;left:140.60px;transform:scaleX(0.9779);">WDT/2025/PL/0145/B</span><span class="t" style="top:58.32px;font-size:8.0px;line-height:9.19px;left:223.80px;transform:scaleX(0.8557);">311-01-01</span><span class="t" style="top:58.32px;font-size:8.0px;line-height:9.19px;left:267.30px;transform:scaleX(0.7783);">*1311|01|01</span><span class="t" style="top:58.32px;font-size:8.0px;line-height:9.19px;left:329.50px;transform:scaleX(0.8730);">BABI4</span>
<span class="t" style="top:69.73px;font-size:8.0px;line-height:9.19px;left:25.90px;transform:scaleX(0.8889);">Tymczasowy</span><span class="t" style="top:69.73px;font-size:8.0px;line-height:9.19px;left:69.50px;transform:scaleX(0.8651);">2025-12-03</span><span class="t" style="top:69.73px;font-size:8.0px;line-height:9.19px;left:140.60px;transform:scaleX(0.9779);">WDT/2025/PL/0145/B</span><span class="t" style="top:69.73px;font-size:8.0px;line-height:9.19px;left:223.80px;transform:scaleX(0.8631);">731-04</span><span class="t" style="top:69.73px;font-size:8.0px;line-height:9.19px;left:267.30px;transform:scaleX(0.7621);">*1731|04</span><span class="t" style="top:69.73px;font-size:8.0px;line-height:9.19px;left:329.50px;transform:scaleX(0.8917);">RPBVIII_RKBII_POZ</span>
<span class="t" style="top:81.15px;font-size:8.0px;line-height:9.19px;left:25.90px;transform:scaleX(0.8889);">Tymczasowy</span><span class="t" style="top:81.15px;font-size:8.0px;line-height:9.19px;left:69.50px;transform:scaleX(0.8651);">2025-12-03</span><span class="t" style="top:81.15px;font-size:8.0px;line-height:9.19px;left:140.60px;transform:scaleX(0.9779);">WDT/2025/PL/0145/B</span><span class="t" style="top:81.15px;font-size:8.0px;line-height:9.19px;left:223.80px;transform:scaleX(0.8574);">212-01-0692</span><span class="t" style="top:81.15px;font-size:8.0px;line-height:9.19px;left:267.30px;transform:scaleX(0.7863);">*1212|01|0692</span><span class="t" style="top:81.15px;font-size:8.0px;line-height:9.19px;left:329.50px;transform:scaleX(0.8912);">BABII3a_D12</span><span class="t" style="top:81.15px;font-size:8.0px;line-height:9.19px;left:432.90px;transform:scaleX(0.8827);">BABII3a_P12</span>
<span class="t" style="top:92.56px;font-size:8.0px;line-height:9.19px;left:25.90px;transform:scaleX(0.8889);">Tymczasowy</span><span class="t" style="top:92.56px;font-size:8.0px;line-height:9.19px;left:69.50px;transform:scaleX(0.8651);">2025-12-03</span><span class="t" style="top:92.56px;font-size:8.0px;line-height:9.19px;left:140.60px;transform:scaleX(0.9779);">WDT/2025/PL/0145/B</span><span class="t" style="top:92.56px;font-size:8.0px;line-height:9.19px;left:223.80px;transform:scaleX(0.8631);">730-04</span><span class="t" style="top:92.56px;font-size:8.0px;line-height:9.19px;left:267.30px;transform:scaleX(0.7621);">*1730|04</span><span class="t" style="top:92.56px;font-size:8.0px;line-height:9.19px;left:329.50px;transform:scaleX(0.8973);">RPAIV_RKAII_POZ</span>
<span class="t" style="top:103.98px;font-size:8.0px;line-height:9.19px;left:25.90px;transform:scaleX(0.8889);">Tymczasowy</span><span class="t" style="top:103.98px;font-size:8.0px;line-height:9.19px;left:69.50px;transform:scaleX(0.8651);">2025-12-03</span><span class="t" style="top:103.98px;font-size:8.0px;line-height:9.19px;left:140.60px;transform:scaleX(0.9291);">101/2025</span><span class="t" style="top:103.98px;font-size:8.0px;line-height:9.19px;left:223.80px;transform:scaleX(0.8417);">234-05-07</span><span class="t" style="top:103.98px;font-size:8.0px;line-height:9.19px;left:267.30px;transform:scaleX(0.7676);">*1234|05|07</span><span class="t" style="top:103.98px;font-size:8.0px;line-height:9.19px;left:329.50px;transform:scaleX(0.9070);">BABII3c_W</span><span class="t" style="top:103.98px;font-size:8.0px;line-height:9.19px;left:432.90px;transform:scaleX(0.8823);">BPBIII3i</span>
<span class="t" style="top:115.40px;font-size:8.0px;line-height:9.19px;left:25.90px;transform:scaleX(0.8889);">Tymczasowy</span><span class="t" style="top:115.40px;font-size:8.0px;line-height:9.19px;left:69.50px;transform:scaleX(0.8651);">2025-12-03</span><span class="t" style="top:115.40px;font-size:8.0px;line-height:9.19px;left:140.60px;transform:scaleX(0.9291);">101/2025</span><span class="t" style="top:115.40px;font-size:8.0px;line-height:9.19px;left:223.80px;transform:scaleX(0.8160);">131-1-4</span><span class="t" style="top:115.40px;font-size:8.0px;line-height:9.19px;left:267.30px;transform:scaleX(0.7521);">*1131|1|4</span><span class="t" style="top:115.40px;font-size:8.0px;line-height:9.19px;left:329.50px;transform:scaleX(0.8834);">BABIII1c1_SPKR</span>
<span class="t" style="top:126.81px;font-size:8.0px;line-height:9.19px;left:25.90px;transform:scaleX(0.8889);">Tymczasowy</span><span class="t" style="top:126.81px;font-size:8.0px;line-height:9.19px;left:69.50px;transform:scaleX(0.8651);">2025-12-03</span><span class="t" style="top:126.81px;font-size:8.0px;line-height:9.19px;left:140.60px;transform:scaleX(0.9291);">180/2025</span><span class="t" style="top:126.81px;font-size:8.0px;line-height:9.19px;left:223.80px;transform:scaleX(0.8160);">134-1-1</span><span class="t" style="top:126.81px;font-size:8.0px;line-height:9.19px;left:267.30px;transform:scaleX(0.7521);">*1134|1|1</span><span class="t" style="top:126.81px;font-size:8.0px;line-height:9.19px;left:329.50px;transform:scaleX(0.8834);">BABIII1c1_SPKR</span>
<span class="t" style="top:138.23px;font-size:8.0px;line-height:9.19px;left:25.90px;transform:scaleX(0.8889);">Tymczasowy</span><span class="t" style="top:138.23px;font-size:8.0px;line-height:9.19px;left:69.50px;transform:scaleX(0.8651);">2025-12-03</span><span class="t" style="top:138.23px;font-size:8.0px;line-height:9.19px;left:140.60px;transform:scaleX(0.9291);">101/2025</span><span class="t" style="top:138.23px;font-size:8.0px;line-height:9.19px;left:223.80px;transform:scaleX(0.8160);">131-1-4</span><span class="t" style="top:138.23px;font-size:8.0px;line-height:9.19px;left:267.30px;transform:scaleX(0.7521);">*1131|1|4</span><span class="t" style="top:138.23px;font-size:8.0px;line-height:9.19px;left:329.50px;transform:scaleX(0.8834);">BABIII1c1_SPKR</span>
<span class="t" style="top:149.64px;font-size:8.0px;line-height:9.19px;left:25.90px;transform:scaleX(0.8889);">Tymczasowy</span><span class="t" style="top:149.64px;font-size:8.0px;line-height:9.19px;left:69.50px;transform:scaleX(0.8651);">2025-12-03</span><span class="t" style="top:149.64px;font-size:8.0px;line-height:9.19px;left:140.60px;transform:scaleX(0.9291);">102/2025</span><span class="t" style="top:149.64px;font-size:8.0px;line-height:9.19px;left:223.80px;transform:scaleX(0.8574);">201-01-1050</span><span class="t" style="top:149.64px;font-size:8.0px;line-height:9.19px;left:267.30px;transform:scaleX(0.7863);">*1201|01|1050</span><span class="t" style="top:149.64px;font-size:8.0px;line-height:9.19px;left:329.50px;transform:scaleX(0.8912);">BABII3a_D12</span><span class="t" style="top:149.64px;font-size:8.0px;line-height:9.19px;left:432.90px;transform:scaleX(0.8827);">BABII3a_P12</span>
<span class="t" style="top:161.06px;font-size:8.0px;line-height:9.19px;left:25.90px;transform:scaleX(0.8889);">Tymczasowy</span><span class="t" style="top:161.06px;font-size:8.0px;line-height:9.19px;left:69.50px;transform:scaleX(0.8651);">2025-12-03</span><span class="t" style="top:161.06px;font-size:8.0px;line-height:9.19px;left:140.60px;transform:scaleX(0.9291);">102/2025</span><span class="t" style="top:161.06px;font-size:8.0px;line-height:9.19px;left:223.80px;transform:scaleX(0.8160);">131-1-3</span><span class="t" style="top:161.06px;font-size:8.0px;line-height:9.19px;left:267.30px;transform:scaleX(0.7521);">*1131|1|3</span><span class="t" style="top:161.06px;font-size:8.0px;line-height:9.19px;left:329.50px;transform:scaleX(0.8834);">BABIII1c1_SPKR</span>
<span class="t" style="top:172.48px;font-size:8.0px;line-height:9.19px;left:25.90px;transform:scaleX(0.8889);">Tymczasowy</span><span class="t" style="top:172.48px;font-size:8.0px;line-height:9.19px;left:69.50px;transform:scaleX(0.8651);">2025-12-03</span><span class="t" style="top:172.48px;font-size:8.0px;line-height:9.19px;left:140.60px;transform:scaleX(0.9291);">180/2025</span><span class="t" style="top:172.48px;font-size:8.0px;line-height:9.19px;left:223.80px;transform:scaleX(0.8631);">750-09</span><span class="t" style="top:172.48px;font-size:8.0px;line-height:9.19px;left:267.30px;transform:scaleX(0.7621);">*1750|09</span>
<span class="t" style="top:183.89px;font-size:8.0px;line-height:9.19px;left:25.90px;transform:scaleX(0.8889);">Tymczasowy</span><span class="t" style="top:183.89px;font-size:8.0px;line-height:9.19px;left:69.50px;transform:scaleX(0.8651);">2025-12-03</span><span class="t" style="top:183.89px;font-size:8.0px;line-height:9.19px;left:140.60px;transform:scaleX(0.9291);">180/2025</span><span class="t" style="top:183.89px;font-size:8.0px;line-height:9.19px;left:223.80px;transform:scaleX(0.8631);">750-02</span><span class="t" style="top:183.89px;font-size:8.0px;line-height:9.19px;left:267.30px;transform:scaleX(0.7621);">*1750|02</span><span class="t" style="top:183.89px;font-size:8.0px;line-height:9.19px;left:329.50px;transform:scaleX(0.8839);">RPGV_RKJV_RK</span>
<span class="t" style="top:195.31px;font-size:8.0px;line-height:9.19px;left:25.90px;transform:scaleX(0.8889);">Tymczasowy</span><span class="t" style="top:195.31px;font-size:8.0px;line-height:9.19px;left:69.50px;transform:scaleX(0.8651);">2025-12-03</span><span class="t" style="top:195.31px;font-size:8.0px;line-height:9.19px;left:140.60px;transform:scaleX(0.9291);">180/2025</span><span class="t" style="top:195.31px;font-size:8.0px;line-height:9.19px;left:223.80px;transform:scaleX(0.8574);">212-01-2880</span><span class="t" style="top:195.31px;font-size:8.0px;line-height:9.19px;left:267.30px;transform:scaleX(0.7863);">*1212|01|2880</span><span class="t" style="top:195.31px;font-size:8.0px;line-height:9.19px;left:329.50px;transform:scaleX(0.8912);">BABII3a_D12</span><span class="t" style="top:195.31px;font-size:8.0px;line-height:9.19px;left:432.90px;transform:scaleX(0.8827);">BABII3a_P12</span>
<span class="t" style="top:206.72px;font-size:8.0px;line-height:9.19px;left:25.90px;transform:scaleX(0.8889);">Tymczasowy</span><span class="t" style="top:206.72px;font-size:8.0px;line-height:9.19px;left:69.50px;transform:scaleX(0.8651);">2025-12-03</span><span class="t" style="top:206.72px;font-size:8.0px;line-height:9.19px;left:140.60px;transform:scaleX(0.9291);">180/2025</span><span class="t" style="top:206.72px;font-size:8.0px;line-height:9.19px;left:223.80px;transform:scaleX(0.8574);">212-01-2880</span><span class="t" style="top:206.72px;font-size:8.0px;line-height:9.19px;left:267.30px;transform:scaleX(0.7863);">*1212|01|2880</span><span class="t" style="top:206.72px;font-size:8.0px;line-height:9.19px;left:329.50px;transform:scaleX(0.8912);">BABII3a_D12</span><span class="t" style="top:206.72px;font-size:8.0px;line-height:9.19px;left:432.90px;transform:scaleX(0.8827);">BABII3a_P12</span>
<span class="t" style="top:218.14px;font-size:8.0px;line-height:9.19px;left:25.90px;transform:scaleX(0.8889);">Tymczasowy</span><span class="t" style="top:218.14px;font-size:8.0px;line-height:9.19px;left:69.50px;transform:scaleX(0.8651);">2025-12-03</span><span class="t" style="top:218.14px;font-size:8.0px;line-height:9.19px;left:140.60px;transform:scaleX(0.9506);">ME-03/12/2025</span><span class="t" style="top:218.14px;font-size:8.0px;line-height:9.19px;left:223.80px;transform:scaleX(0.8574);">212-01-0367</span><span class="t" style="top:218.14px;font-size:8.0px;line-height:9.19px;left:267.30px;transform:scaleX(0.7863);">*1212|01|0367</span><span class="t" style="top:218.14px;font-size:8.0px;line-height:9.19px;left:329.50px;transform:scaleX(0.8912);">BABII3a_D12</span><span class="t" style="top:218.14px;font-size:8.0px;line-height:9.19px;left:432.90px;transform:scaleX(0.8827);">BABII3a_P12</span>
<span class="t" style="top:229.56px;font-size:8.0px;line-height:9.19px;left:25.90px;transform:scaleX(0.8889);">Tymczasowy</span><span class="t" style="top:229.56px;font-size:8.0px;line-height:9.19px;left:69.50px;transform:scaleX(0.8651);">2025-12-03</span><span class="t" style="top:229.56px;font-size:8.0px;line-height:9.19px;left:140.60px;transform:scaleX(0.8631);">del.11</span><span class="t" style="top:229.56px;font-size:8.0px;line-height:9.19px;left:223.80px;transform:scaleX(0.8417);">234-02-50</span><span class="t" style="top:229.56px;font-size:8.0px;line-height:9.19px;left:267.30px;transform:scaleX(0.7676);">*1234|02|50</span>
<span class="t" style="top:240.97px;font-size:8.0px;line-height:9.19px;left:25.90px;transform:scaleX(0.8889);">Tymczasowy</span><span class="t" style="top:240.97px;font-size:8.0px;line-height:9.19px;left:69.50px;transform:scaleX(0.8651);">2025-12-03</span><span class="t" style="top:240.97px;font-size:8.0px;line-height:9.19px;left:140.60px;transform:scaleX(0.9414);">0231/2025</span><span class="t" style="top:240.97px;font-size:8.0px;line-height:9.19px;left:223.80px;transform:scaleX(0.8574);">202-01-0096</span><span class="t" style="top:240.97px;font-size:8.0px;line-height:9.19px;left:267.30px;transform:scaleX(0.7863);">*1202|01|0096</span><span class="t" style="top:240.97px;font-size:8.0px;line-height:9.19px;left:329.50px;transform:scaleX(0.8876);">BPBIII3d_D12</span><span class="t" style="top:240.97px;font-size:8.0px;line-height:9.19px;left:432.90px;transform:scaleX(0.8834);">BPBIII3d_P12</span>
<span class="t" style="top:252.39px;font-size:8.0px;line-height:9.19px;left:25.90px;transform:scaleX(0.8889);">Tymczasowy</span><span class="t" style="top:252.39px;font-size:8.0px;line-height:9.19px;left:69.50px;transform:scaleX(0.8651);">2025-12-03</span><span class="t" style="top:252.39px;font-size:8.0px;line-height:9.19px;left:140.60px;transform:scaleX(0.9414);">0231/2025</span><span class="t" style="top:252.39px;font-size:8.0px;line-height:9.19px;left:223.80px;transform:scaleX(0.8160);">131-2-1</span><span class="t" style="top:252.39px;font-size:8.0px;line-height:9.19px;left:267.30px;transform:scaleX(0.7521);">*1131|2|1</span><span class="t" style="top:252.39px;font-size:8.0px;line-height:9.19px;left:329.50px;transform:scaleX(0.8834);">BABIII1c1_SPKR</span>
<span class="t" style="top:263.80px;font-size:8.0px;line-height:9.19px;left:25.90px;transform:scaleX(0.8889);">Tymczasowy</span><span class="t" style="top:263.80px;font-size:8.0px;line-height:9.19px;left:69.50px;transform:scaleX(0.8651);">2025-12-03</span><span class="t" style="top:263.80px;font-size:8.0px;line-height:9.19px;left:140.60px;transform:scaleX(0.9414);">0231/2025</span><span class="t" style="top:263.80px;font-size:8.0px;line-height:9.19px;left:223.80px;transform:scaleX(0.8574);">202-01-2407</span><span class="t" style="top:263.80px;font-size:8.0px;line-height:9.19px;left:267.30px;transform:scaleX(0.7863);">*1202|01|2407</span><span class="t" style="top:263.80px;font-size:8.0px;line-height:9.19px;left:329.50px;transform:scaleX(0.8876);">BPBIII3d_D12</span><span class="t" style="top:263.80px;font-size:8.0px;line-height:9.19px;left:432.90px;transform:scaleX(0.8834);">BPBIII3d_P12</span>
<span class="t" style="top:275.22px;font-size:8.0px;line-height:9.19px;left:25.90px;transform:scaleX(0.8889);">Tymczasowy</span><span class="t" style="top:275.22px;font-size:8.0px;line-height:9.19px;left:69.50px;transform:scaleX(0.8651);">2025-12-03</span><span class="t" style="top:275.22px;font-size:8.0px;line-height:9.19px;left:140.60px;transform:scaleX(0.9414);">0231/2025</span><span class="t" style="top:275.22px;font-size:8.0px;line-height:9.19px;left:223.80px;transform:scaleX(0.8160);">131-2-1</span><span class="t" style="top:275.22px;font-size:8.0px;line-height:9.19px;left:267.30px;transform:scaleX(0.7521);">*1131|2|1</span><span class="t" style="top:275.22px;font-size:8.0px;line-height:9.19px;left:329.50px;transform:scaleX(0.8834);">BABIII1c1_SPKR</span>
<span class="t" style="top:286.64px;font-size:8.0px;line-height:9.19px;left:25.90px;transform:scaleX(0.8889);">Tymczasowy</span><span class="t" style="top:286.64px;font-size:8.0px;line-height:9.19px;left:69.50px;transform:scaleX(0.8651);">2025-12-03</span><span class="t" style="top:286.64px;font-size:8.0px;line-height:9.19px;left:140.60px;transform:scaleX(0.8631);">del.11</span><span class="t" style="top:286.64px;font-size:8.0px;line-height:9.19px;left:223.80px;transform:scaleX(0.8417);">234-01-48</span><span class="t" style="top:286.64px;font-size:8.0px;line-height:9.19px;left:267.30px;transform:scaleX(0.7676);">*1234|01|48</span>
<span class="t" style="top:298.05px;font-size:8.0px;line-height:9.19px;left:25.90px;transform:scaleX(0.8889);">Tymczasowy</span><span class="t" style="top:298.05px;font-size:8.0px;line-height:9.19px;left:69.50px;transform:scaleX(0.8651);">2025-12-03</span><span class="t" style="top:298.05px;font-size:8.0px;line-height:9.19px;left:140.60px;transform:scaleX(0.8631);">del.11</span><span class="t" style="top:298.05px;font-size:8.0px;line-height:9.19px;left:223.80px;transform:scaleX(0.8631);">407-01</span><span class="t" style="top:298.05px;font-size:8.0px;line-height:9.19px;left:267.30px;transform:scaleX(0.7621);">*1407|01</span>
<span class="t" style="top:309.47px;font-size:8.0px;line-height:9.19px;left:25.90px;transform:scaleX(0.8889);">Tymczasowy</span><span class="t" style="top:309.47px;font-size:8.0px;line-height:9.19px;left:69.50px;transform:scaleX(0.8651);">2025-12-03</span><span class="t" style="top:309.47px;font-size:8.0px;line-height:9.19px;left:140.60px;transform:scaleX(0.9414);">0231/2025</span><span class="t" style="top:309.47px;font-size:8.0px;line-height:9.19px;left:223.80px;transform:scaleX(0.8160);">131-2-1</span><span class="t" style="top:309.47px;font-size:8.0px;line-height:9.19px;left:267.30px;transform:scaleX(0.7521);">*1131|2|1</span><span class="t" style="top:309.47px;font-size:8.0px;line-height:9.19px;left:329.50px;transform:scaleX(0.8834);">BABIII1c1_SPKR</span>
<span class="t" style="top:320.88px;font-size:8.0px;line-height:9.19px;left:25.90px;transform:scaleX(0.8889);">Tymczasowy</span><span class="t" style="top:320.88px;font-size:8.0px;line-height:9.19px;left:69.50px;transform:scaleX(0.8651);">2025-12-03</span><span class="t" style="top:320.88px;font-size:8.0px;line-height:9.19px;left:140.60px;transform:scaleX(0.8631);">del.11</span><span class="t" style="top:320.88px;font-size:8.0px;line-height:9.19px;left:223.80px;transform:scaleX(0.8631);">751-01</span><span class="t" style="top:320.88px;font-size:8.0px;line-height:9.19px;left:267.30px;transform:scaleX(0.7621);">*1751|01</span>
<svg style="left:0;top:0" width="683" height="600" viewBox="0 0 683 600"><rect x="19.1" y="330.7" width="664" height="11" rx="0" fill="#0479d7"/></svg><span class="t" style="top:332.30px;font-size:8.0px;line-height:9.19px;left:25.90px;transform:scaleX(0.8889);color:#fff;">Tymczasowy</span><span class="t" style="top:332.30px;font-size:8.0px;line-height:9.19px;left:69.50px;transform:scaleX(0.8651);color:#fff;">2025-12-03</span><span class="t" style="top:332.30px;font-size:8.0px;line-height:9.19px;left:140.60px;transform:scaleX(0.8631);color:#fff;">del.11</span>
<span class="t" style="top:343.72px;font-size:8.0px;line-height:9.19px;left:25.90px;transform:scaleX(0.8889);">Tymczasowy</span><span class="t" style="top:343.72px;font-size:8.0px;line-height:9.19px;left:69.50px;transform:scaleX(0.8651);">2025-12-03</span><span class="t" style="top:343.72px;font-size:8.0px;line-height:9.19px;left:140.60px;transform:scaleX(0.9506);">ME-03/12/2025</span>
<span class="t" style="top:355.10px;font-size:8.0px;line-height:9.19px;left:25.90px;transform:scaleX(0.8889);">Tymczasowy</span><span class="t" style="top:355.10px;font-size:8.0px;line-height:9.19px;left:69.50px;transform:scaleX(0.8651);">2025-12-03</span><span class="t" style="top:355.10px;font-size:8.0px;line-height:9.19px;left:140.60px;transform:scaleX(0.9506);">ME-03/12/2025</span>
<span class="t" style="top:366.49px;font-size:8.0px;line-height:9.19px;left:25.90px;transform:scaleX(0.8889);">Tymczasowy</span><span class="t" style="top:366.49px;font-size:8.0px;line-height:9.19px;left:69.50px;transform:scaleX(0.8651);">2025-12-03</span><span class="t" style="top:366.49px;font-size:8.0px;line-height:9.19px;left:140.60px;transform:scaleX(0.9506);">ME-03/12/2025</span>
<span class="t" style="top:377.87px;font-size:8.0px;line-height:9.19px;left:25.90px;transform:scaleX(0.8889);">Tymczasowy</span><span class="t" style="top:377.87px;font-size:8.0px;line-height:9.19px;left:69.50px;transform:scaleX(0.8651);">2025-12-03</span><span class="t" style="top:377.87px;font-size:8.0px;line-height:9.19px;left:140.60px;transform:scaleX(0.9506);">ME-03/12/2025</span>
<span class="t" style="top:389.26px;font-size:8.0px;line-height:9.19px;left:25.90px;transform:scaleX(0.8889);">Tymczasowy</span><span class="t" style="top:389.26px;font-size:8.0px;line-height:9.19px;left:69.50px;transform:scaleX(0.8651);">2025-12-03</span><span class="t" style="top:389.26px;font-size:8.0px;line-height:9.19px;left:140.60px;transform:scaleX(0.9506);">ME-03/12/2025</span><span class="t" style="top:389.26px;font-size:8.0px;line-height:9.19px;left:432.90px;transform:scaleX(0.8834);">BPBIII3d_P12</span>
<span class="t" style="top:400.64px;font-size:8.0px;line-height:9.19px;left:25.90px;transform:scaleX(0.8889);">Tymczasowy</span><span class="t" style="top:400.64px;font-size:8.0px;line-height:9.19px;left:69.50px;transform:scaleX(0.8651);">2025-12-03</span><span class="t" style="top:400.64px;font-size:8.0px;line-height:9.19px;left:140.60px;transform:scaleX(0.9414);">0231/2025</span>
<span class="t" style="top:412.03px;font-size:8.0px;line-height:9.19px;left:25.90px;transform:scaleX(0.8889);">Tymczasowy</span><span class="t" style="top:412.03px;font-size:8.0px;line-height:9.19px;left:69.50px;transform:scaleX(0.8651);">2025-12-03</span><span class="t" style="top:412.03px;font-size:8.0px;line-height:9.19px;left:140.60px;transform:scaleX(0.9414);">0231/2025</span>
<span class="t" style="top:423.41px;font-size:8.0px;line-height:9.19px;left:25.90px;transform:scaleX(0.8889);">Tymczasowy</span><span class="t" style="top:423.41px;font-size:8.0px;line-height:9.19px;left:69.50px;transform:scaleX(0.8651);">2025-12-03</span><span class="t" style="top:423.41px;font-size:8.0px;line-height:9.19px;left:140.60px;transform:scaleX(0.9414);">0231/2025</span>
<span class="t" style="top:434.80px;font-size:8.0px;line-height:9.19px;left:25.90px;transform:scaleX(0.8889);">Tymczasowy</span><span class="t" style="top:434.80px;font-size:8.0px;line-height:9.19px;left:69.50px;transform:scaleX(0.8651);">2025-12-03</span><span class="t" style="top:434.80px;font-size:8.0px;line-height:9.19px;left:140.60px;transform:scaleX(0.9414);">0231/2025</span>
<span class="t" style="top:446.18px;font-size:8.0px;line-height:9.19px;left:25.90px;transform:scaleX(0.8889);">Tymczasowy</span><span class="t" style="top:446.18px;font-size:8.0px;line-height:9.19px;left:69.50px;transform:scaleX(0.8651);">2025-12-03</span><span class="t" style="top:446.18px;font-size:8.0px;line-height:9.19px;left:140.60px;transform:scaleX(0.9414);">0231/2025</span>
<span class="t" style="top:457.57px;font-size:8.0px;line-height:9.19px;left:25.90px;transform:scaleX(0.8889);">Tymczasowy</span><span class="t" style="top:457.57px;font-size:8.0px;line-height:9.19px;left:69.50px;transform:scaleX(0.8651);">2025-12-03</span><span class="t" style="top:457.57px;font-size:8.0px;line-height:9.19px;left:140.60px;transform:scaleX(0.9414);">0231/2025</span><span class="t" style="top:457.57px;font-size:8.0px;line-height:9.19px;left:432.90px;transform:scaleX(0.8823);">BPBIII3i</span>
<span class="t" style="top:468.95px;font-size:8.0px;line-height:9.19px;left:25.90px;transform:scaleX(0.8889);">Tymczasowy</span><span class="t" style="top:468.95px;font-size:8.0px;line-height:9.19px;left:69.50px;transform:scaleX(0.8651);">2025-12-03</span><span class="t" style="top:468.95px;font-size:8.0px;line-height:9.19px;left:140.60px;transform:scaleX(0.9414);">0231/2025</span>
<span class="t" style="top:480.34px;font-size:8.0px;line-height:9.19px;left:25.90px;transform:scaleX(0.8889);">Tymczasowy</span><span class="t" style="top:480.34px;font-size:8.0px;line-height:9.19px;left:69.50px;transform:scaleX(0.8651);">2025-12-03</span><span class="t" style="top:480.34px;font-size:8.0px;line-height:9.19px;left:140.60px;transform:scaleX(0.9414);">0231/2025</span>
<span class="t" style="top:491.72px;font-size:8.0px;line-height:9.19px;left:25.90px;transform:scaleX(0.8889);">Tymczasowy</span><span class="t" style="top:491.72px;font-size:8.0px;line-height:9.19px;left:69.50px;transform:scaleX(0.8651);">2025-12-03</span><span class="t" style="top:491.72px;font-size:8.0px;line-height:9.19px;left:140.60px;transform:scaleX(0.9414);">0231/2025</span>
<span class="t" style="top:503.11px;font-size:8.0px;line-height:9.19px;left:25.90px;transform:scaleX(0.8889);">Tymczasowy</span><span class="t" style="top:503.11px;font-size:8.0px;line-height:9.19px;left:69.50px;transform:scaleX(0.8651);">2025-12-03</span><span class="t" style="top:503.11px;font-size:8.0px;line-height:9.19px;left:140.60px;transform:scaleX(0.9414);">0231/2025</span>
<span class="t" style="top:514.49px;font-size:8.0px;line-height:9.19px;left:25.90px;transform:scaleX(0.8889);">Tymczasowy</span><span class="t" style="top:514.49px;font-size:8.0px;line-height:9.19px;left:69.50px;transform:scaleX(0.8651);">2025-12-03</span><span class="t" style="top:514.49px;font-size:8.0px;line-height:9.19px;left:140.60px;transform:scaleX(0.9414);">0231/2025</span>
<span class="t" style="top:525.88px;font-size:8.0px;line-height:9.19px;left:25.90px;transform:scaleX(0.8889);">Tymczasowy</span><span class="t" style="top:525.88px;font-size:8.0px;line-height:9.19px;left:69.50px;transform:scaleX(0.8651);">2025-12-03</span><span class="t" style="top:525.88px;font-size:8.0px;line-height:9.19px;left:140.60px;transform:scaleX(0.9414);">0231/2025</span><span class="t" style="top:525.88px;font-size:8.0px;line-height:9.19px;left:432.90px;transform:scaleX(0.8827);">BABII3a_P12</span>
<span class="t" style="top:537.26px;font-size:8.0px;line-height:9.19px;left:25.90px;transform:scaleX(0.8889);">Tymczasowy</span><span class="t" style="top:537.26px;font-size:8.0px;line-height:9.19px;left:69.50px;transform:scaleX(0.8651);">2025-12-03</span><span class="t" style="top:537.26px;font-size:8.0px;line-height:9.19px;left:140.60px;transform:scaleX(0.9414);">0231/2025</span>
<span class="t" style="top:548.65px;font-size:8.0px;line-height:9.19px;left:25.90px;transform:scaleX(0.8889);">Tymczasowy</span><span class="t" style="top:548.65px;font-size:8.0px;line-height:9.19px;left:69.50px;transform:scaleX(0.8651);">2025-12-03</span><span class="t" style="top:548.65px;font-size:8.0px;line-height:9.19px;left:140.60px;transform:scaleX(0.9414);">0231/2025</span><span class="t" style="top:548.65px;font-size:8.0px;line-height:9.19px;left:432.90px;transform:scaleX(0.8823);">BPBIII3i</span>
<span class="t" style="top:560.03px;font-size:8.0px;line-height:9.19px;left:25.90px;transform:scaleX(0.8889);">Tymczasowy</span><span class="t" style="top:560.03px;font-size:8.0px;line-height:9.19px;left:69.50px;transform:scaleX(0.8651);">2025-12-03</span><span class="t" style="top:560.03px;font-size:8.0px;line-height:9.19px;left:140.60px;transform:scaleX(0.9414);">0231/2025</span>
<span class="t" style="top:389.26px;font-size:8.0px;line-height:9.19px;left:679.30px;">1</span>
<span class="t" style="top:574.10px;font-size:8.0px;line-height:9.19px;left:678.90px;">9</span>
<svg style="left:0;top:0;mix-blend-mode:multiply" width="683" height="60" viewBox="0 0 683 60"><path d="M322.4 37C322.6 35 323.5 34 326 33.8L587.7 33.3Q597 30.6 605 30.7Q614 30.8 623 33.2L633.4 33.6L633.4 43.3L606 43L590 43.7L560 45.5L535 46L500 45.7L460 47L430 48.7L400 48L360 46L330 44.8L322.6 44.4Z" fill="#fafa12"/></svg>
<svg style="left:8px;top:588px" width="5" height="5" viewBox="0 0 5 5"><path d="M3.8 0.3L0.9 2.5L3.8 4.7" fill="none" stroke="#3c3c3c" stroke-width="1.25"/></svg>
<svg style="left:0;top:0" width="683" height="600" viewBox="0 0 683 600" fill="none" stroke="#d4121e" stroke-width="1.35" stroke-linecap="round" stroke-linejoin="round">
<path d="M342.9 172.3L344.5 177.4Q345.8 180 347.1 181.5Q348.4 183.3 349.5 183.2L354 182.2L358.4 180L362.5 176L366.6 173"/>
<path d="M345.2 232.2L347.1 235.6Q348.6 239.2 349.8 239.2Q351 239 353.3 237.6L357.7 234.5L362.1 233L366.1 230.9"/>
<path d="M348.2 297.4L349.6 302.6Q351.4 306.6 352.4 306.4Q354 306 357 304.4L362.8 300.7L368.7 297.1L373.8 293.8"/>
</svg>
<svg style="left:0;top:0" width="683" height="600" viewBox="0 0 683 600"><rect x="165.2" y="332.6" width="249.2" height="261.8" fill="#000" opacity="0.42" filter="url(#sh)"/><rect x="163.6" y="330.9" width="248.9" height="261.7" fill="#f2f2f2" stroke="#c4c4c4" stroke-width="0.9"/></svg>
<span class="t" style="top:336.30px;font-size:7.9px;line-height:9.08px;left:179.90px;transform:scaleX(0.9947);color:#141414;">Nowa pozycja...</span>
<span class="t" style="top:336.30px;font-size:7.9px;line-height:9.08px;left:379.70px;transform:scaleX(1.0541);color:#141414;">Ctrl+N</span>
<span class="t" style="top:348.70px;font-size:7.9px;line-height:9.08px;left:179.90px;transform:scaleX(0.9804);color:#141414;">Edytuj</span>
<span class="t" style="top:348.70px;font-size:7.9px;line-height:9.08px;left:367.60px;transform:scaleX(1.0045);color:#141414;">Ctrl+Enter</span>
<span class="t" style="top:361.50px;font-size:7.9px;line-height:9.08px;left:179.90px;transform:scaleX(0.9283);color:#141414;">Usuń</span>
<span class="t" style="top:361.50px;font-size:7.9px;line-height:9.08px;left:380.30px;transform:scaleX(1.0276);color:#141414;">Ctrl+D</span>
<span class="t" style="top:374.10px;font-size:7.9px;line-height:9.08px;left:179.90px;transform:scaleX(0.9915);color:#141414;">Właściwości</span>
<span class="t" style="top:374.10px;font-size:7.9px;line-height:9.08px;left:359.40px;transform:scaleX(1.0367);color:#141414;">Shift+Ctrl+V</span>
<span class="t" style="top:386.70px;font-size:7.9px;line-height:9.08px;left:179.90px;transform:scaleX(1.0277);color:#141414;">Dodaj notatkę do logu</span>
<span class="t" style="top:386.70px;font-size:7.9px;line-height:9.08px;left:359.80px;transform:scaleX(1.0488);color:#141414;">Shift+Ctrl+L</span>
<span class="t" style="top:399.50px;font-size:7.9px;line-height:9.08px;left:179.90px;transform:scaleX(0.9837);color:#141414;">Pokaż LOG systemowy dla tego zestawu dok.</span>
<span class="t" style="top:412.20px;font-size:7.9px;line-height:9.08px;left:179.90px;transform:scaleX(0.9825);color:#141414;">Wstaw korektę zapisu</span>
<span class="t" style="top:430.50px;font-size:7.9px;line-height:9.08px;left:179.90px;transform:scaleX(1.0070);color:#141414;">Widok...</span>
<svg style="left:0;top:0" width="683" height="600" viewBox="0 0 683 600"><path d="M403 432.50L405.7 434.80L403 437.10Z" fill="#1a1a1a"/></svg>
<span class="t" style="top:443.10px;font-size:7.9px;line-height:9.08px;left:179.90px;transform:scaleX(0.9484);color:#141414;">Edycja...</span>
<svg style="left:0;top:0" width="683" height="600" viewBox="0 0 683 600"><path d="M403 445.10L405.7 447.40L403 449.70Z" fill="#1a1a1a"/></svg>
<span class="t" style="top:461.80px;font-size:7.9px;line-height:9.08px;left:179.90px;transform:scaleX(0.9931);color:#141414;">Pokaz pulpit ...</span>
<svg style="left:0;top:0" width="683" height="600" viewBox="0 0 683 600"><rect x="165" y="477.9" width="244" height="11.7" rx="0" fill="#0479d7"/></svg>
<svg style="left:0;top:0;mix-blend-mode:multiply" width="683" height="600" viewBox="0 0 683 600"><rect x="174.3" y="477.9" width="89.3" height="11.7" rx="1" fill="#fafa12"/></svg>
<span class="t" style="top:479.30px;font-size:7.9px;line-height:9.08px;left:179.90px;transform:scaleX(0.9580);color:#cfe62a;">Specjalne...</span>
<svg style="left:0;top:0" width="683" height="600" viewBox="0 0 683 600"><path d="M403 481.30L405.7 483.60L403 485.90Z" fill="#fff"/></svg>
<span class="t" style="top:492.40px;font-size:7.9px;line-height:9.08px;left:179.90px;transform:scaleX(0.9865);color:#141414;">Przejdź do operacji</span>
<span class="t" style="top:505.00px;font-size:7.9px;line-height:9.08px;left:179.90px;transform:scaleX(0.9810);color:#141414;">Dziennik narast.</span>
<span class="t" style="top:517.80px;font-size:7.9px;line-height:9.08px;left:179.90px;transform:scaleX(1.0065);color:#141414;">Generowanie zapisów rozrachunkowych (np. kompensaty)</span>
<svg style="left:0;top:0" width="683" height="600" viewBox="0 0 683 600"><path d="M403 519.80L405.7 522.10L403 524.40Z" fill="#1a1a1a"/></svg>
<span class="t" style="top:530.50px;font-size:7.9px;line-height:9.08px;left:179.90px;transform:scaleX(0.9793);color:#141414;">Generowanie zapisu &quot;RO&quot; dla wskazanego zapisu w dekrecie</span>
<svg style="left:0;top:0" width="683" height="600" viewBox="0 0 683 600"><path d="M403 532.50L405.7 534.80L403 537.10Z" fill="#1a1a1a"/></svg>
<span class="t" style="top:543.20px;font-size:7.9px;line-height:9.08px;left:179.90px;transform:scaleX(0.9674);color:#a6a6a6;">Pokaz rozliczenie</span>
<span class="t" style="top:543.20px;font-size:7.9px;line-height:9.08px;left:392.20px;transform:scaleX(0.8685);color:#a6a6a6;">F11</span>
<span class="t" style="top:555.70px;font-size:7.9px;line-height:9.08px;left:179.90px;transform:scaleX(0.9815);color:#141414;">Rozlicz kompensatę</span>
<span class="t" style="top:555.70px;font-size:7.9px;line-height:9.08px;left:374.40px;transform:scaleX(0.9736);color:#141414;">Ctrl+F11</span>
<span class="t" style="top:568.50px;font-size:7.9px;line-height:9.08px;left:179.90px;transform:scaleX(1.0055);color:#141414;">Klonuj polecenie księgowania</span>
<span class="t" style="top:581.30px;font-size:7.9px;line-height:9.08px;left:179.90px;color:#141414;">Klonuj zapis jako storno</span>
<svg style="left:0;top:0" width="683" height="600" viewBox="0 0 683 600"><path d="M166 426.0H409.5" stroke="#d4d4d4" stroke-width="1"/></svg>
<svg style="left:0;top:0" width="683" height="600" viewBox="0 0 683 600"><path d="M166 456.5H409.5" stroke="#d4d4d4" stroke-width="1"/></svg>
<svg style="left:0;top:0" width="683" height="600" viewBox="0 0 683 600"><path d="M166 474.8H409.5" stroke="#d4d4d4" stroke-width="1"/></svg>
<svg style="left:0;top:0" width="683" height="600" viewBox="0 0 683 600">
<!-- new doc -->
<path d="M167.6 335.4H172L174 337.4V343.6H167.6Z" fill="#fff" stroke="#3a3a3a" stroke-width="0.9" stroke-linejoin="round"/>
<path d="M172 335.4V337.4H174" fill="none" stroke="#3a3a3a" stroke-width="0.7"/>
<!-- edit -->
<rect x="166.5" y="348.5" width="9" height="8.2" fill="#e4e4e4" stroke="#2c2c2c" stroke-width="0.9"/>
<rect x="166.5" y="348.5" width="9" height="1.8" fill="#14145c"/>
<path d="M168.2 355V353.2H171.6" fill="none" stroke="#2c2c2c" stroke-width="1"/>
<path d="M169.4 351.8H172.6V350.9L174.9 352.8L172.6 354.7V353.8H169.4Z" fill="#e9e440" stroke="#6c6c20" stroke-width="0.3"/>
<path d="M173.6 350L176 347.4" stroke="#14145c" stroke-width="1.3"/>
<!-- X -->
<path d="M166.6 361.1L174.6 369M174.6 361.1L166.6 369" stroke="#101010" stroke-width="1.5" stroke-linecap="round"/>
<!-- properties -->
<rect x="165.8" y="376.2" width="7.6" height="6" fill="#e6e6e6" stroke="#3c3c3c" stroke-width="1.05"/>
<path d="M167.2 378.6H172M167.2 380.4H172M169.6 377.6V381.8" stroke="#555" stroke-width="0.9"/>
<path d="M166.6 376L171.6 373.8H173.6" fill="none" stroke="#444" stroke-width="1"/>
<rect x="173.8" y="373.4" width="2.4" height="3.6" fill="#15157a"/>
<!-- note -->
<defs><linearGradient id="ng" x1="0" y1="0" x2="0.6" y2="1"><stop offset="0" stop-color="#fff2b4"/><stop offset="1" stop-color="#ffd64e"/></linearGradient></defs>
<path d="M166.2 386.4H175.9V393.2L173.6 395.4H166.2Z" fill="url(#ng)" stroke="#eec656" stroke-width="0.5"/>
<path d="M173.6 395.4V393.2H175.9" fill="#fff4c8" stroke="#e2b848" stroke-width="0.4"/>
<!-- log bubble -->
<path d="M170.8 397.7L176 402L172.6 405.6L170.8 408.2L169 405.6L165.6 402Z" fill="#fff" stroke="#8e8e8e" stroke-width="0.8" stroke-linejoin="round"/>
<circle cx="170.7" cy="400.6" r="0.8" fill="#1a1acc"/>
<rect x="170" y="401.8" width="1.5" height="2.8" rx="0.6" fill="#1a1acc"/>
<!-- doc -->
<path d="M167.4 411.4H171.8L173.9 413.5V420.2H167.4Z" fill="#fff" stroke="#3a3a3a" stroke-width="0.9" stroke-linejoin="round"/>
<path d="M171.8 411.4V413.5H173.9" fill="none" stroke="#3a3a3a" stroke-width="0.7"/>
<!-- pulpit -->
<circle cx="171.3" cy="466.2" r="4.6" fill="#d4eeee" stroke="#989eb8" stroke-width="1"/>
<path d="M171.6 461.8C168.6 461.8 167.4 463.6 166.3 466.4C167.4 469 168.8 470.4 171 470.6C169.4 468.8 169.2 464.4 171.6 461.8Z" fill="#3fa222"/>
<path d="M171.4 466.4L173.4 464.6" stroke="#285a5a" stroke-width="0.9"/>
</svg>

<svg style="left:0;top:0" width="683" height="600" viewBox="0 0 683 600"><rect x="410.9" y="476.6" width="183.5" height="51.8" fill="#000" opacity="0.42" filter="url(#sh)"/><rect x="409.3" y="474.9" width="183.4" height="51.7" fill="#f2f2f2" stroke="#c4c4c4" stroke-width="0.9"/></svg>
<span class="t" style="top:480.20px;font-size:7.9px;line-height:9.08px;left:425.60px;transform:scaleX(0.9847);color:#141414;">Dokumenty związane z tą operacją</span>
<span class="t" style="top:480.20px;font-size:7.9px;line-height:9.08px;left:560.00px;transform:scaleX(1.0253);color:#141414;">Ctrl+O</span>
<span class="t" style="top:498.20px;font-size:7.9px;line-height:9.08px;left:425.60px;transform:scaleX(0.9930);color:#141414;">Sprawdź bilans dekretów</span>
<svg style="left:0;top:0" width="683" height="600" viewBox="0 0 683 600"><rect x="411.3" y="513.6" width="179.5" height="12.8" rx="0" fill="#0479d7"/></svg>
<svg style="left:0;top:0;mix-blend-mode:multiply" width="683" height="600" viewBox="0 0 683 600"><rect x="418" y="513.5" width="172.6" height="12.9" rx="2.5" fill="#fafa12"/></svg>
<span class="t" style="top:516.00px;font-size:7.9px;line-height:9.08px;left:425.60px;transform:scaleX(0.9911);color:#cfe62a;">Aktualizuj znaczniki JPK Cit z planu kont</span>
<svg style="left:0;top:0" width="683" height="600" viewBox="0 0 683 600"><path d="M411.5 493.7H590.5" stroke="#d4d4d4" stroke-width="1"/></svg>
<svg style="left:0;top:0" width="683" height="600" viewBox="0 0 683 600"><path d="M411.5 510.5H590.5" stroke="#d4d4d4" stroke-width="1"/></svg>
<svg style="left:0;top:0" width="683" height="600" viewBox="0 0 683 600">
<path d="M411.6 481L415.6 479L417.4 486.6L413.8 488.6Z" fill="#fff" stroke="#2e2e2e" stroke-width="0.8" stroke-linejoin="round"/>
<circle cx="419" cy="483.2" r="3.4" fill="#1d4f9e"/>
<path d="M415.7 482.6A3.4 3.4 0 0 1 422.3 482.6C420.5 484.2 417.4 484 415.7 482.6Z" fill="#3e9c32"/>
<rect x="411.6" y="496.8" width="4.4" height="5.4" fill="#e8ecf6" stroke="#5a5a6a" stroke-width="0.8"/>
<path d="M412.6 498.6H415M412.6 500.2H415" stroke="#6a78b0" stroke-width="0.6"/>
<circle cx="417.2" cy="502.2" r="2.2" fill="#dfe6ff" stroke="#2a2a4a" stroke-width="0.9"/>
<circle cx="417.2" cy="502.2" r="0.9" fill="#3c3cc8"/>
<path d="M418.9 503.9L421.8 506.6" stroke="#141414" stroke-width="1.3" stroke-linecap="round"/>
</svg>

</body></html>
